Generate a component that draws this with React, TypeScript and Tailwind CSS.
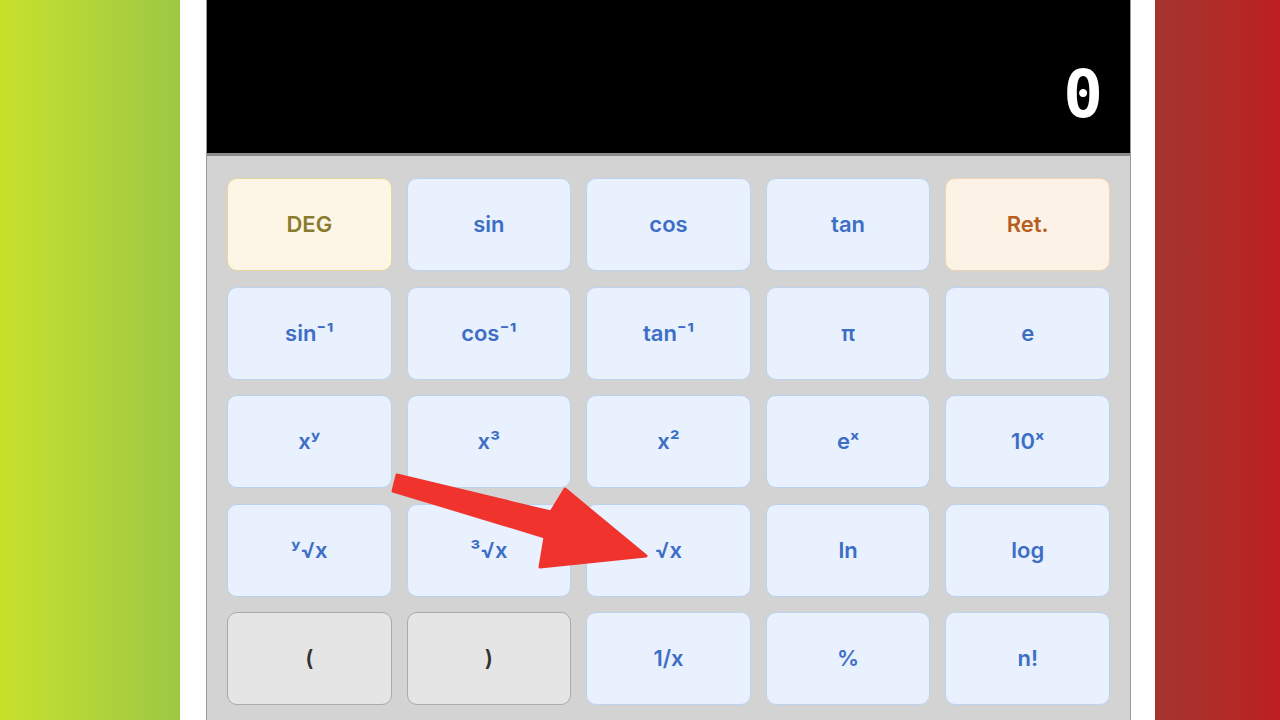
import React from 'react';

type Tone = 'fn' | 'deg' | 'ret' | 'paren';

interface Key {
  label: React.ReactNode;
  tone?: Tone;
}

const toneClass: Record<Tone, string> = {
  fn: 'bg-[#e8f1fd] border-[#bcd3ee] text-[#3d6ec6]',
  deg: 'bg-[#fdf6e7] border-[#e6d69c] text-[#8b7b2c]',
  ret: 'bg-[#fdf2e6] border-[#f0d4b2] text-[#b65e22]',
  paren: 'bg-[#e5e5e5] border-[#a9a9a9] text-[#333333]',
};

const keys: Key[] = [
  { label: 'DEG', tone: 'deg' },
  { label: 'sin' },
  { label: 'cos' },
  { label: 'tan' },
  { label: 'Ret.', tone: 'ret' },
  { label: 'sin⁻¹' },
  { label: 'cos⁻¹' },
  { label: 'tan⁻¹' },
  { label: 'π' },
  { label: 'e' },
  { label: 'xʸ' },
  { label: 'x³' },
  { label: 'x²' },
  { label: 'eˣ' },
  { label: '10ˣ' },
  { label: 'ʸ√x' },
  { label: '³√x' },
  { label: '√x' },
  { label: 'ln' },
  { label: 'log' },
  { label: '(', tone: 'paren' },
  { label: ')', tone: 'paren' },
  { label: '1/x' },
  { label: '%' },
  { label: 'n!' },
];

export default function App() {
  return (
    <div className="relative flex w-[1280px] h-[720px] overflow-hidden font-['Inter',sans-serif]">
      {/* left backdrop */}
      <div className="w-[180px] h-full bg-gradient-to-r from-[#c7e12a] to-[#9dc843]" />

      {/* page */}
      <div className="w-[975px] h-full bg-white pl-[26px] pr-[24px]">
        <div className="h-full flex flex-col border-l border-r border-[#9a9a9a]">
          <div className="h-[156px] bg-black flex items-end justify-end pr-[27px] pb-[25px] border-b-[3px] border-[#8c8c8c]">
            <span className="text-white text-[66px] leading-none font-bold font-['DejaVu_Sans_Mono',monospace]">0</span>
          </div>
          <div className="flex-1 bg-[#d3d3d3] px-[20px] pt-[22px] grid grid-cols-5 gap-x-[15px] gap-y-[15.5px] content-start">
            {keys.map((k, i) => (
              <button
                key={i}
                className={`h-[93px] rounded-[10px] border-[1.5px] flex items-center justify-center text-[22px] font-semibold ${toneClass[k.tone ?? 'fn']}`}
              >
                {k.label}
              </button>
            ))}
          </div>
        </div>
      </div>

      {/* right backdrop */}
      <div className="flex-1 h-full bg-gradient-to-r from-[#a3352f] to-[#bd1e1f]" />

      {/* annotation arrow */}
      <svg className="absolute left-0 top-0 pointer-events-none" width="1280" height="720" viewBox="0 0 1280 720">
        <polygon
          points="397,475 551,512 565,489 646,556 540,567 545,537 393,491"
          fill="#f0332d"
          stroke="#f0332d"
          strokeWidth="3"
          strokeLinejoin="round"
        />
      </svg>
    </div>
  );
}
